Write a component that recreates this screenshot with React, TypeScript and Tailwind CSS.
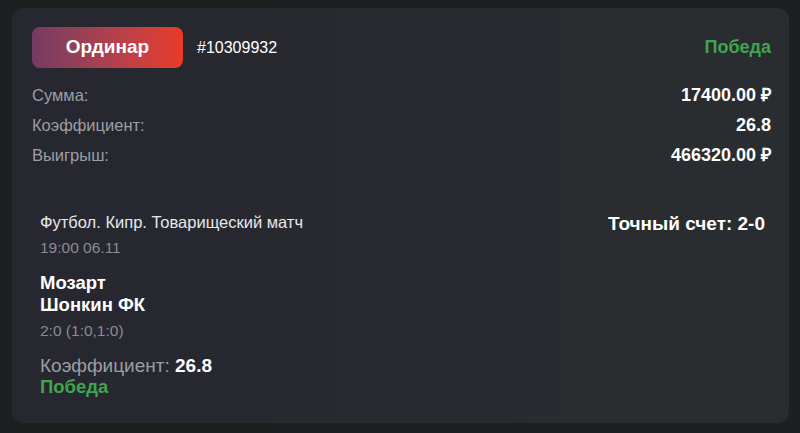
import React from 'react';

const font = { fontFamily: '"Liberation Sans", Arial, sans-serif' };

const rows = [
  { label: 'Сумма:', value: '17400.00 ₽' },
  { label: 'Коэффициент:', value: '26.8' },
  { label: 'Выигрыш:', value: '466320.00 ₽' },
];

const App: React.FC = () => {
  return (
    <div className="w-[800px] h-[433px] bg-[#1e1f20] pt-2 pl-3 pr-[11px] pb-[10px] flex" style={font}>
      <div className="flex-1 rounded-xl bg-gradient-to-r from-[#26272f] to-[#2a2d30] pt-[19px] pl-5 pr-[18px] flex flex-col">
        {/* header */}
        <div className="flex items-center justify-between">
          <div className="flex items-center">
            <div className="w-[151px] h-[41px] rounded-lg bg-gradient-to-r from-[#743b62] to-[#ea3a25] flex items-center justify-center text-white font-bold text-[19px]">
              Ординар
            </div>
            <span className="ml-[14px] text-white text-[16px]">#10309932</span>
          </div>
          <span className="text-[#3fa54f] font-bold text-[18px]">Победа</span>
        </div>

        {/* summary rows */}
        <div className="mt-[17px] flex flex-col gap-[10px]">
          {rows.map((r) => (
            <div key={r.label} className="flex items-center justify-between h-5">
              <span className="text-[#9c9ea6] text-[16.5px]">{r.label}</span>
              <span className="text-white font-bold text-[18px]">{r.value}</span>
            </div>
          ))}
        </div>

        {/* event */}
        <div className="mt-[47px] pl-2 pr-[6px] flex justify-between">
          <div className="flex flex-col">
            <span className="text-[#e6e7ea] text-[16.5px] leading-5">Футбол. Кипр. Товарищеский матч</span>
            <span className="text-[#8a8c93] text-[15.5px] leading-[18px] mt-[7px]">19:00 06.11</span>
            <div className="mt-[15px] flex flex-col text-white font-bold text-[18.5px] leading-[22px]">
              <span>Мозарт</span>
              <span>Шонкин ФК</span>
            </div>
            <span className="text-[#8a8c93] text-[15.5px] leading-[18px] mt-[6px]">2:0 (1:0,1:0)</span>
            <div className="mt-[15px] text-[19px] leading-[21px]">
              <span className="text-[#9c9ea6]">Коэффициент: </span>
              <span className="text-white font-bold">26.8</span>
            </div>
            <span className="text-[#3fa54f] font-bold text-[18.5px] leading-[21px]">Победа</span>
          </div>
          <span className="text-white font-bold text-[19px] leading-6">Точный счет: 2-0</span>
        </div>
      </div>
    </div>
  );
};

export default App;
